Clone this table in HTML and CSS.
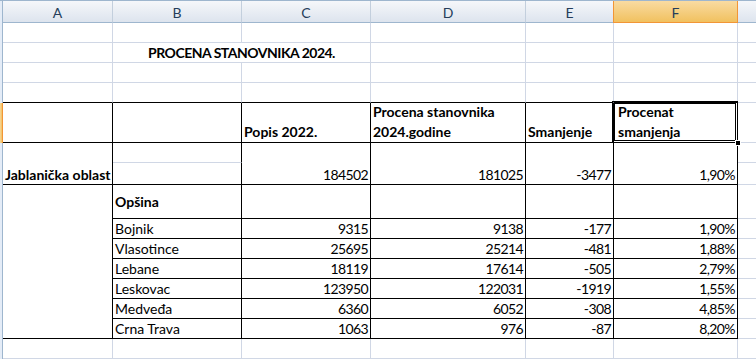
FILE: index.html
```html
<!DOCTYPE html>
<html lang="sr">
<head>
  <meta charset="UTF-8">
  <title>Procena stanovnika 2024.</title>
  <link rel="stylesheet" href="styles.css">
</head>
<body>

  <div class="sheet">
    <!-- column headers -->
    <div class="rh"></div>
    <div class="ch">A</div>
    <div class="ch">B</div>
    <div class="ch">C</div>
    <div class="ch">D</div>
    <div class="ch">E</div>
    <div class="ch sel">F</div>
    <div class="ch"></div>

    <!-- 1 -->
    <div class="rh"></div>
    <div class="c"></div><div class="c"></div><div class="c"></div><div class="c"></div><div class="c"></div><div class="c"></div><div class="c"></div>

    <!-- 2: title across B:C -->
    <div class="rh"></div>
    <div class="c"></div>
    <div class="c title span2">PROCENA STANOVNIKA 2024.</div>
    <div class="c"></div><div class="c"></div><div class="c"></div><div class="c"></div>

    <!-- 3 -->
    <div class="rh"></div>
    <div class="c"></div><div class="c"></div><div class="c"></div><div class="c"></div><div class="c"></div><div class="c"></div><div class="c"></div>

    <!-- 4 -->
    <div class="rh"></div>
    <div class="c bb"></div><div class="c bb"></div><div class="c bb"></div><div class="c bb"></div><div class="c bb"></div><div class="c bb"></div><div class="c"></div>

    <!-- 5: table header -->
    <div class="rh sel"></div>
    <div class="c bb br"></div>
    <div class="c bb br"></div>
    <div class="c bb br hd">Popis 2022.</div>
    <div class="c bb br hd">Procena stanovnika 2024.godine</div>
    <div class="c bb br hd">Smanjenje</div>
    <div class="c bb br hd active">Procenat<br>smanjenja<span class="handle"></span></div>
    <div class="c"></div>

    <!-- 6-7: region total -->
    <div class="rh"></div>
    <div class="c bb br hd tall">Jablanička oblast</div>
    <div class="c br"></div>
    <div class="c bb br tall num">184502</div>
    <div class="c bb br tall num">181025</div>
    <div class="c bb br tall num">-3477</div>
    <div class="c bb br tall num">1,90%</div>
    <div class="c"></div>

    <div class="rh"></div>
    <div class="c bb br"></div>
    <div class="c"></div>

    <!-- 8: municipalities -->
    <div class="rh"></div>
    <div class="c bb br block"></div>
    <div class="c bb br hd mid">Opšina</div>
    <div class="c bb br"></div>
    <div class="c bb br"></div>
    <div class="c bb br"></div>
    <div class="c bb br"></div>
    <div class="c"></div>

    <div class="rh"></div>
    <div class="c bb br">Bojnik</div>
    <div class="c bb br num">9315</div>
    <div class="c bb br num">9138</div>
    <div class="c bb br num">-177</div>
    <div class="c bb br num">1,90%</div>
    <div class="c"></div>

    <div class="rh"></div>
    <div class="c bb br">Vlasotince</div>
    <div class="c bb br num">25695</div>
    <div class="c bb br num">25214</div>
    <div class="c bb br num">-481</div>
    <div class="c bb br num">1,88%</div>
    <div class="c"></div>

    <div class="rh"></div>
    <div class="c bb br">Lebane</div>
    <div class="c bb br num">18119</div>
    <div class="c bb br num">17614</div>
    <div class="c bb br num">-505</div>
    <div class="c bb br num">2,79%</div>
    <div class="c"></div>

    <div class="rh"></div>
    <div class="c bb br">Leskovac</div>
    <div class="c bb br num">123950</div>
    <div class="c bb br num">122031</div>
    <div class="c bb br num">-1919</div>
    <div class="c bb br num">1,55%</div>
    <div class="c"></div>

    <div class="rh"></div>
    <div class="c bb br">Medveđa</div>
    <div class="c bb br num">6360</div>
    <div class="c bb br num">6052</div>
    <div class="c bb br num">-308</div>
    <div class="c bb br num">4,85%</div>
    <div class="c"></div>

    <div class="rh"></div>
    <div class="c bb br">Crna Trava</div>
    <div class="c bb br num">1063</div>
    <div class="c bb br num">976</div>
    <div class="c bb br num">-87</div>
    <div class="c bb br num">8,20%</div>
    <div class="c"></div>

    <!-- 15 -->
    <div class="rh"></div>
    <div class="c"></div><div class="c"></div><div class="c"></div><div class="c"></div><div class="c"></div><div class="c"></div><div class="c"></div>
  </div>

</body>
</html>
```

FILE: styles.css
```css
html, body { margin: 0; padding: 0; background: #fff; overflow: hidden; }
body { width: 756px; height: 360px; font-family: Lato, "Open Sans", sans-serif; font-size: 14px; color: #000; }

.sheet {
  display: grid;
  grid-template-columns: 3px 110px 129px 129px 155px 88px 124px 40px;
  grid-template-rows: 22px 20px 20px 20px 20px 40px 20px 22px 34px 20px 20px 20px 20px 20px 20px 20px 20px;
  height: 359px; overflow: hidden;
  border-top: 1px solid #9eb6ce;
}

/* row header strip and column headers */
.rh { background: #e4ecf7; border-right: 1px solid #9eb6ce; }
.rh.sel { background: linear-gradient(to right, #f8d79b, #f1c15f); border-right-color: #f29536; }
.ch {
  display: flex; align-items: center; justify-content: center;
  background: linear-gradient(#f5f7fa, #dde4ee);
  border-right: 1px solid #c3cfdd; border-bottom: 1px solid #9eb6ce;
  color: #253d5a; font-size: 14px; padding-top: 1px;
}
.ch.sel { background: linear-gradient(#f9dba2, #f1c15f); border-right-color: #f29536; border-bottom-color: #f29536; border-left: 1px solid #f29536; margin-left: -1px; }

/* cells: gridlines on right/bottom, content sits on the bottom edge like Excel */
.c {
  box-sizing: border-box;
  display: flex; align-items: flex-end;
  border-right: 1px solid #d0d7e5; border-bottom: 1px solid #d0d7e5;
  padding: 0 2px; line-height: 19px; white-space: nowrap; min-width: 0;
}
.bb { border-bottom-color: #000; }
.br { border-right-color: #000; }
.num { justify-content: flex-end; letter-spacing: -0.6px; padding-right: 2px; }
.hd { font-weight: 700; }
.mid { align-items: center; }
.span2 { grid-column: span 2; }
.tall { grid-row: span 2; }
.block { grid-row: span 7; }

.title { justify-content: center; font-weight: 700; letter-spacing: -0.5px; border-right-color: #d0d7e5; }

/* wrapped header texts in row 5 */
.c.hd:not(.tall) { white-space: normal; line-height: 20px; }
.active { padding-left: 4px; }

/* active cell outline with fill handle */
.active { position: relative; }
.active::before {
  content: ""; position: absolute; left: -2px; top: -2px; right: -1px; bottom: -1px;
  border: 3px double #000;
}
.handle {
  position: absolute; right: -4px; bottom: -4px; width: 4px; height: 4px;
  background: #000; border: 1px solid #fff;
}
```
